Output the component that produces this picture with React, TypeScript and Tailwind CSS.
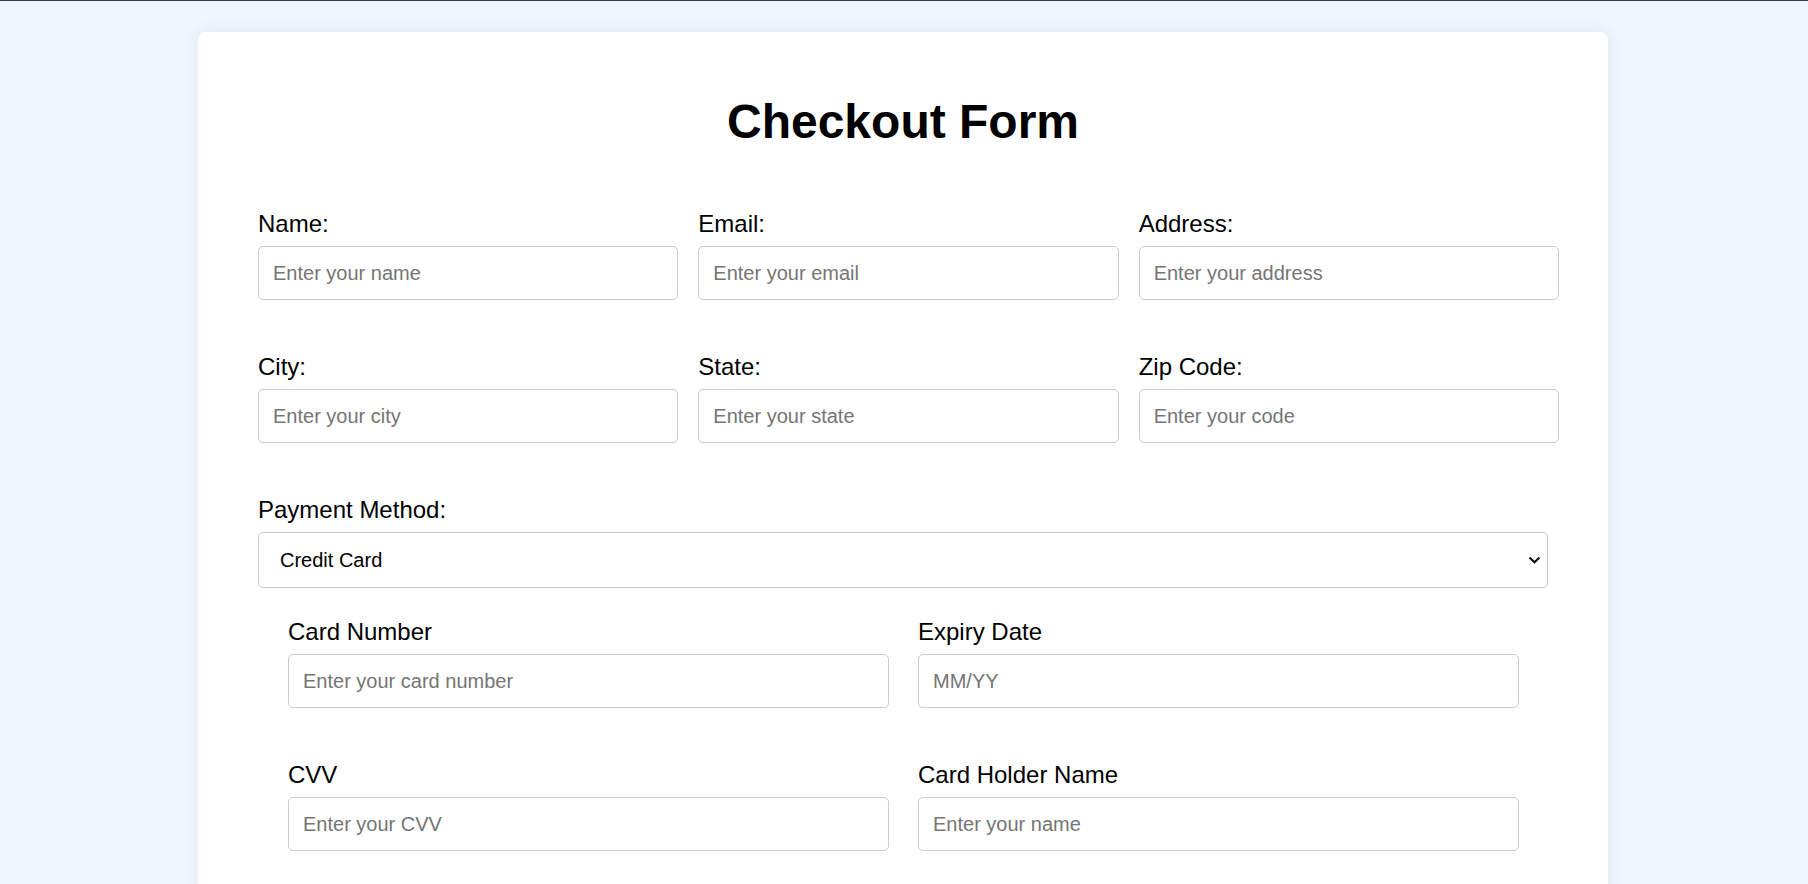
import React from "react";

const font = "font-['Liberation_Sans',Arial,Helvetica,sans-serif]";

const inputClass =
  "block h-[54px] w-full rounded-[5px] border border-[#cccccc] bg-white px-[14px] text-[20px] text-black outline-none placeholder:text-[#757575]";

type Field = { label: string; placeholder: string; type?: string };

const addressFields: Field[] = [
  { label: "Name:", placeholder: "Enter your name" },
  { label: "Email:", placeholder: "Enter your email", type: "email" },
  { label: "Address:", placeholder: "Enter your address" },
  { label: "City:", placeholder: "Enter your city" },
  { label: "State:", placeholder: "Enter your state" },
  { label: "Zip Code:", placeholder: "Enter your code" },
];

const cardFields: Field[] = [
  { label: "Card Number", placeholder: "Enter your card number" },
  { label: "Expiry Date", placeholder: "MM/YY" },
  { label: "CVV", placeholder: "Enter your CVV" },
  { label: "Card Holder Name", placeholder: "Enter your name" },
];

function FormField({ field }: { field: Field }) {
  return (
    <div>
      <label className="mb-2 block text-[24px] leading-[28px] text-black">{field.label}</label>
      <input className={inputClass} type={field.type ?? "text"} placeholder={field.placeholder} />
    </div>
  );
}

export default function App() {
  return (
    <div className={`min-h-screen bg-[#eff6ff] ${font}`}>
      <div className="h-px bg-[#3a3a3a]" />
      <div className="ml-[198px] mt-[31px] w-[1410px] rounded-lg bg-white pb-[70px] pl-[60px] pt-[62px] shadow-[0_0_16px_rgba(30,60,110,0.09)]">
        <h1 className="w-[1290px] text-center text-[48px] font-bold leading-[55px] text-black">Checkout Form</h1>

        <form className="mt-[61px] w-[1301px]">
          <div className="grid grid-cols-3 gap-x-[20px] gap-y-[53px]">
            {addressFields.map((field) => (
              <FormField key={field.label} field={field} />
            ))}
          </div>

          <div className="mt-[53px]">
            <label className="mb-2 block text-[24px] leading-[28px] text-black">Payment Method:</label>
            <div className="relative w-[1290px]">
              <select
                className="block h-[56px] w-full appearance-none rounded-[5px] border border-[#cccccc] bg-white pl-[21px] text-[20px] text-black outline-none"
                defaultValue="credit"
              >
                <option value="credit">Credit Card</option>
                <option value="paypal">PayPal</option>
              </select>
              <svg
                className="pointer-events-none absolute right-[7px] top-[24px]"
                width="13"
                height="8"
                viewBox="0 0 13 8"
                fill="none"
              >
                <path d="M1.5 1.5 L6.5 6.3 L11.5 1.5" stroke="#111" strokeWidth="2.2" />
              </svg>
            </div>
          </div>

          <div className="ml-[30px] mt-[30px] grid w-[1231px] grid-cols-2 gap-x-[29px] gap-y-[53px]">
            {cardFields.map((field) => (
              <FormField key={field.label} field={field} />
            ))}
          </div>
        </form>
      </div>
    </div>
  );
}
